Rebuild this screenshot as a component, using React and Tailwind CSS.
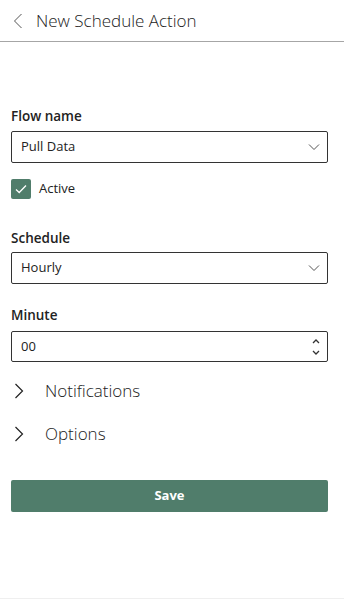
import React from "react";

const font = { fontFamily: '"Open Sans", "Noto Sans", sans-serif' };

function Chevron({ className }) {
  return (
    <svg className={className} width="12" height="8" viewBox="0 0 12 8" fill="none">
      <path d="M1 1.5 L6 6.5 L11 1.5" stroke="#555" strokeWidth="1" />
    </svg>
  );
}

function Select({ value }) {
  return (
    <div className="flex h-[32px] items-center justify-between rounded-[2px] border border-[#333] pl-[9px] pr-[7px]">
      <span className="text-[13px] text-[#222]">{value}</span>
      <Chevron />
    </div>
  );
}

function Label({ children, className = "" }) {
  return (
    <div className={`text-[13.5px] leading-[20px] font-semibold text-[#222] ${className}`}>{children}</div>
  );
}

function Expander({ children }) {
  return (
    <div className="flex h-[43px] items-center">
      <svg width="10" height="16" viewBox="0 0 10 16" className="ml-[14px]" fill="none">
        <path d="M1.5 1 L8.5 8 L1.5 15" stroke="#222" strokeWidth="1.2" />
      </svg>
      <span className="ml-[21px] text-[17px] leading-[24px] font-light text-[#222]">{children}</span>
    </div>
  );
}

export default function App() {
  return (
    <div className="flex h-[605px] w-[344px] flex-col bg-white" style={font}>
      <div className="flex h-[42px] items-center border-b border-[#a6a6a6]">
        <svg width="10" height="16" viewBox="0 0 10 16" className="ml-[13px]" fill="none">
          <path d="M8.5 1 L1.5 8 L8.5 15" stroke="#555" strokeWidth="1" />
        </svg>
        <span className="ml-[13px] text-[17px] font-light text-[#222]">New Schedule Action</span>
      </div>
      <div className="mx-[11px] mt-[64px] w-[317px]">
        <Label>Flow name</Label>
        <div className="mt-[5px]">
          <Select value="Pull Data" />
        </div>
        <div className="mt-[16px] flex items-center">
          <div className="flex h-[20px] w-[20px] items-center justify-center rounded-[2px] bg-[#507d6b]">
            <svg width="12" height="10" viewBox="0 0 12 10" fill="none">
              <path d="M1 5.5 L4.2 8.5 L11 1.5" stroke="white" strokeWidth="1.3" />
            </svg>
          </div>
          <span className="ml-[8px] text-[13px] text-[#222]">Active</span>
        </div>
        <Label className="mt-[29px]">Schedule</Label>
        <div className="mt-[4px]">
          <Select value="Hourly" />
        </div>
        <Label className="mt-[21px]">Minute</Label>
        <div className="mt-[6px] flex h-[31px] items-center justify-between rounded-[2px] border border-[#333] pl-[9px] pr-[7px]">
          <span className="text-[13px] text-[#222]">00</span>
          <div className="flex flex-col gap-[6px]">
            <svg width="8" height="5" viewBox="0 0 8 5" fill="none">
              <path d="M1 4 L4 1 L7 4" stroke="#333" strokeWidth="1.3" />
            </svg>
            <svg width="8" height="5" viewBox="0 0 8 5" fill="none">
              <path d="M1 1 L4 4 L7 1" stroke="#333" strokeWidth="1.3" />
            </svg>
          </div>
        </div>
      </div>
      <div className="mt-[7px]">
        <Expander>Notifications</Expander>
        <Expander>Options</Expander>
      </div>
      <div className="mx-[11px] mt-[25px] flex h-[32px] w-[317px] items-center justify-center rounded-[2px] bg-[#507d6b]">
        <span className="text-[13px] font-bold text-white">Save</span>
      </div>
      <div className="mt-auto mb-[6px] h-px bg-[#efefef]" />
    </div>
  );
}
